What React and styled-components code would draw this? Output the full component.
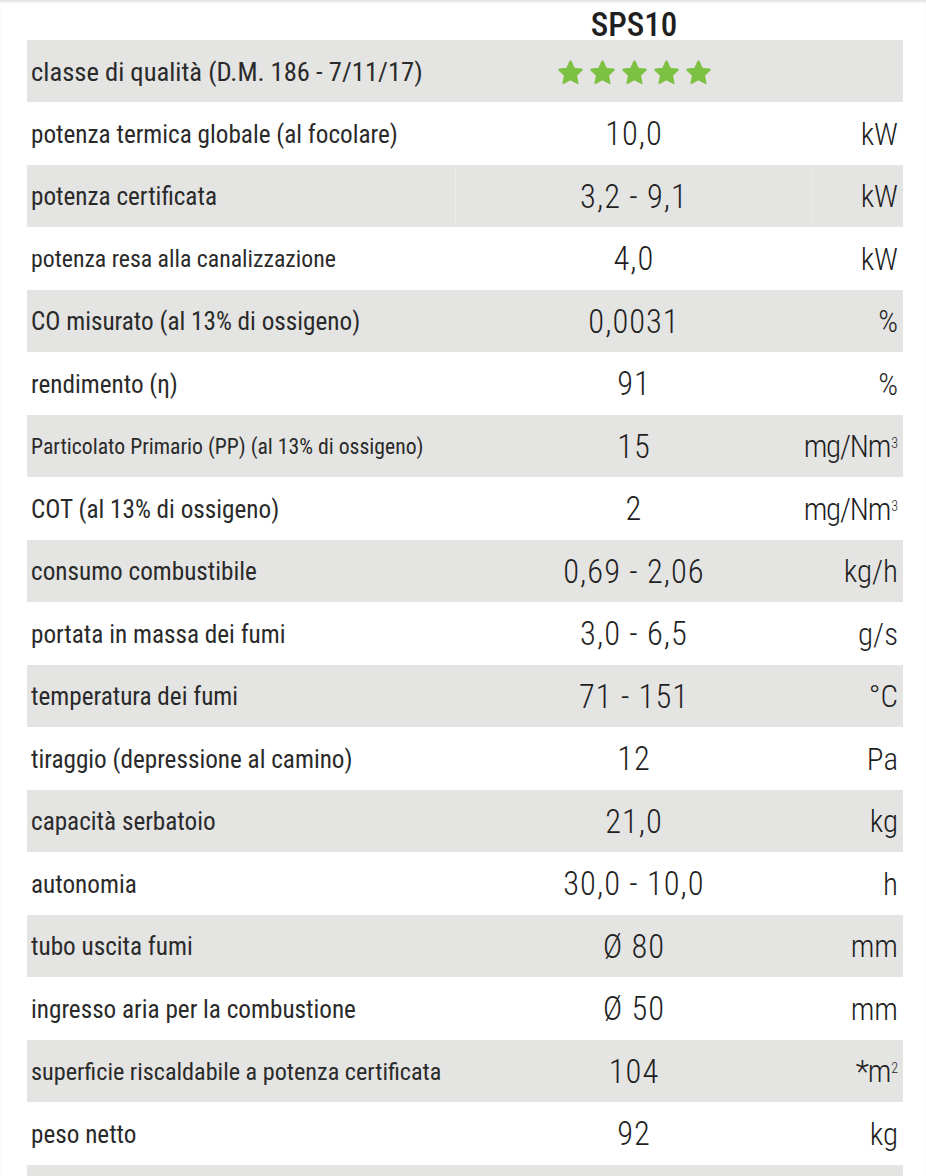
import React from 'react'
import styled, {createGlobalStyle} from 'styled-components'

const rows = [
  {label: 'potenza termica globale (al focolare)', value: '10,0', unit: 'kW'},
  {label: 'potenza certificata', value: '3,2 - 9,1', unit: 'kW', divided: true},
  {label: 'potenza resa alla canalizzazione', value: '4,0', unit: 'kW', size: 23.8},
  {label: 'CO misurato (al 13% di ossigeno)', value: '0,0031', unit: '%'},
  {label: 'rendimento (η)', value: '91', unit: '%'},
  {label: 'Particolato Primario (PP) (al 13% di ossigeno)', value: '15', unit: 'mg/Nm', sup: '3', size: 21.7},
  {label: 'COT (al 13% di ossigeno)', value: '2', unit: 'mg/Nm', sup: '3'},
  {label: 'consumo combustibile', value: '0,69 - 2,06', unit: 'kg/h'},
  {label: 'portata in massa dei fumi', value: '3,0 - 6,5', unit: 'g/s'},
  {label: 'temperatura dei fumi', value: '71 - 151', unit: '°C'},
  {label: 'tiraggio (depressione al camino)', value: '12', unit: 'Pa'},
  {label: 'capacità serbatoio', value: '21,0', unit: 'kg'},
  {label: 'autonomia', value: '30,0 - 10,0', unit: 'h'},
  {label: 'tubo uscita fumi', value: 'Ø 80', unit: 'mm'},
  {label: 'ingresso aria per la combustione', value: 'Ø 50', unit: 'mm'},
  {label: 'superficie riscaldabile a potenza certificata', value: '104', unit: '*m', sup: '2', size: 24.2},
  {label: 'peso netto', value: '92', unit: 'kg'},
]

const Star = () => (
  <svg width="27" height="26" viewBox="0 0 24 23.2">
    <polygon
      points="12,2.3 14.94,8.75 21.99,9.56 16.76,14.35 18.17,21.29 12,17.8 5.83,21.29 7.24,14.35 2.01,9.56 9.06,8.75"
      fill="#7cc142"
      stroke="#7cc142"
      strokeWidth="2"
      strokeLinejoin="round"
    />
  </svg>
)

const App = () => (
  <>
    <GlobalStyle />
    <Page>
      <Table>
        <HeaderRow>
          <Label />
          <Model>SPS10</Model>
          <Unit />
        </HeaderRow>
        <Row $shaded>
          <Label $size={26.6}>classe di qualità (D.M. 186 - 7/11/17)</Label>
          <Stars>
            {[0, 1, 2, 3, 4].map(i => (
              <Star key={i} />
            ))}
          </Stars>
          <Unit />
        </Row>
        {rows.map((r, i) => (
          <Row key={i} $shaded={i % 2 === 1} $divided={r.divided}>
            <Label $size={r.size}>{r.label}</Label>
            <Value>{r.value}</Value>
            <Unit $tight={!!r.sup}>
              {r.unit}
              {r.sup && <Sup>{r.sup}</Sup>}
            </Unit>
          </Row>
        ))}
        <Row $shaded>
          <Label />
          <Value />
          <Unit />
        </Row>
      </Table>
    </Page>
  </>
)

export default App

const GlobalStyle = createGlobalStyle`
  body {
    margin: 0;
    background: #fff;
    color: #1f1f1f;
    font-family: "Roboto Condensed", "Liberation Sans", sans-serif;
  }
`

const Page = styled.div`
  height: 1176px;
  overflow: hidden;
  padding-top: 5px;
  box-sizing: border-box;
  box-shadow: inset 0 3px 3px -1px rgba(0, 0, 0, 0.12);
`

const Table = styled.div`
  margin: 0 23px 0 27px;
`

const Row = styled.div`
  display: grid;
  grid-template-columns: 428px 358px 90px;
  height: 62.5px;
  align-items: center;
  background: ${p => (p.$shaded ? '#e4e4e3' : '#fff')};
  border-bottom: 1px solid #fff;
  box-sizing: border-box;

  & > *:nth-child(2) {
    border-left: 1px solid ${p => (p.$divided ? '#ececeb' : 'transparent')};
    border-right: 1px solid ${p => (p.$divided ? '#ececeb' : 'transparent')};
  }
`

const HeaderRow = styled(Row)`
  height: 35px;
  border-bottom: 0;
`

const Cell = styled.div`
  height: 100%;
  display: flex;
  align-items: center;
  white-space: nowrap;
  box-sizing: border-box;
`

const Label = styled(Cell)`
  padding: 2px 0 0 4px;
  font-size: ${p => p.$size || 25.2}px;
  font-weight: 400;
  color: #2a2a2a;
`

const Value = styled(Cell)`
  justify-content: center;
  font-size: 32.5px;
  font-weight: 300;
  letter-spacing: 1px;
  padding-top: 2px;
`

const Model = styled(Cell)`
  justify-content: center;
  font-size: 33px;
  font-weight: 500;
`

const Stars = styled(Cell)`
  justify-content: center;
  gap: 5px;
  padding-top: 2px;
`

const Unit = styled(Cell)`
  font-size: 31px;
  font-weight: 300;
  justify-content: flex-end;
  padding: 2px 5px 0 0;
  letter-spacing: ${p => (p.$tight ? '-1.2px' : '0')};
`

const Sup = styled.span`
  font-size: 14px;
  align-self: flex-start;
  margin: 18px 0 0 1px;
  letter-spacing: 0;
`
